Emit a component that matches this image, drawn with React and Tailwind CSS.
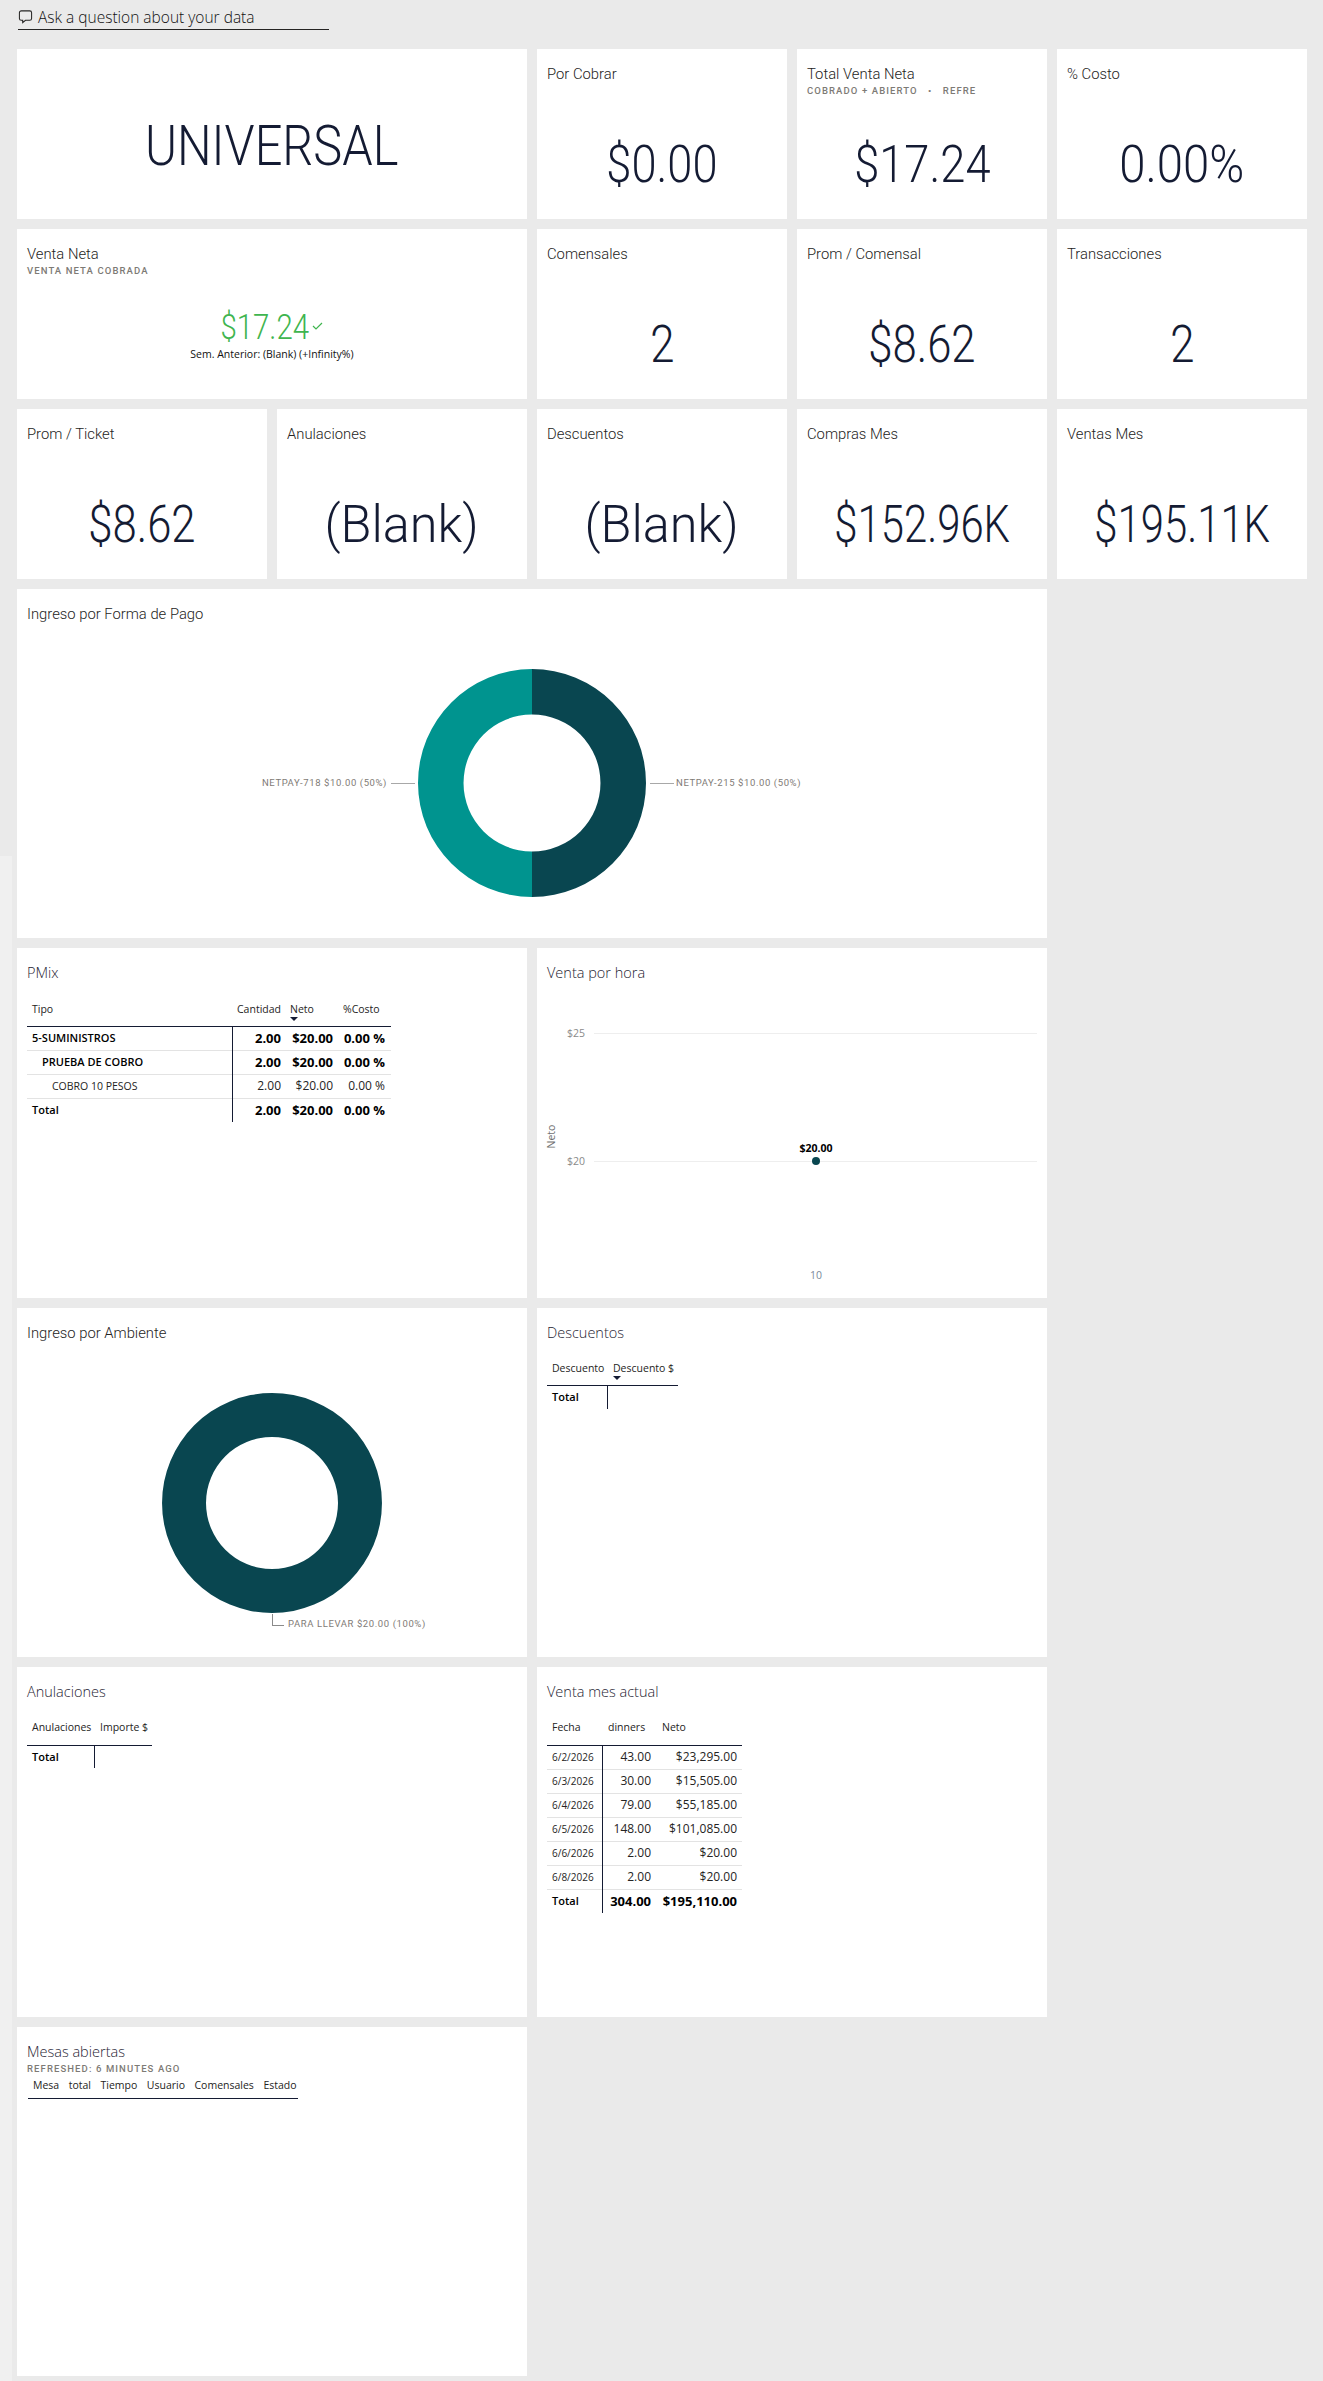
const din = "font-['Roboto',sans-serif] font-light";
const seg = "font-['Open_Sans','Noto_Sans',sans-serif]";

function Title({ children }) {
  return <div className={`${din} text-[14.8px] leading-[20px] text-[#252423] whitespace-nowrap`}>{children}</div>;
}
function Sub({ children }) {
  return <div className="font-['Roboto',sans-serif] text-[9.5px] leading-[12px] mt-[1px] font-medium tracking-[1.1px] text-[#7d7a75] whitespace-pre">{children}</div>;
}
function Kpi({ title, sub, value, scale = "scale-x-[0.84]" }) {
  return (
    <div className="h-[170px] bg-white flex flex-col">
      <div className="h-[62px] pl-[10px] pt-[15px]">
        <Title>{title}</Title>
        {sub && <Sub>{sub}</Sub>}
      </div>
      <div className="flex-1 flex items-center justify-center">
        <span className={`${din} text-[52px] leading-none text-[#141b33] inline-block ${scale} whitespace-nowrap`}>{value}</span>
      </div>
    </div>
  );
}
function SegTitle({ children }) {
  return <div className={`${seg} font-light text-[14.5px] leading-[20px] text-[#1f2433] whitespace-nowrap`}>{children}</div>;
}
function Donut({ size, segments }) {
  return (
    <svg width={size} height={size} viewBox={`0 0 ${size} ${size}`} className="block">
      {segments.map((s, i) => <path key={i} d={s.d} fill={s.fill} />)}
    </svg>
  );
}
function ring(R, r, a0, a1) {
  const p = (rad, a) => `${R + rad * Math.sin(a)} ${R - rad * Math.cos(a)}`;
  return `M${p(R, a0)} A${R} ${R} 0 0 1 ${p(R, a1)} L${p(r, a1)} A${r} ${r} 0 0 0 ${p(r, a0)} Z`;
}
const hd = `${seg} text-[10.5px] text-[#252423] font-normal text-left align-top`;
const Arrow = () => (
  <svg width="8" height="4" viewBox="0 0 8 4" className="block mt-[-1px]"><path d="M0 0h8L4 4z" fill="#141b33" /></svg>
);

function PMix() {
  const rows = [
    ["5-SUMINISTROS", "pl-[5px]", true],
    ["PRUEBA DE COBRO", "pl-[15px]", true],
    ["COBRO 10 PESOS", "pl-[25px]", false],
    ["Total", "pl-[5px]", true],
  ];
  return (
    <table className={`${seg} mt-[7px] w-[364px] table-fixed border-collapse`}>
      <thead>
        <tr className="h-[36px] border-b border-[#141b33]">
          <th className={`${hd} w-[205px] pl-[5px] pt-[12px]`}>Tipo</th>
          <th className={`${hd} w-[53px] pl-[5px] pt-[12px]`}>Cantidad</th>
          <th className={`${hd} w-[53px] pl-[5px] pt-[12px]`}>
            Neto
            <Arrow />
          </th>
          <th className={`${hd} pl-[5px] pt-[12px]`}>%Costo</th>
        </tr>
      </thead>
      <tbody>
        {rows.map(([t, p, b], i) => {
          const lab = b ? "font-semibold text-[11px] text-black" : "font-normal text-[10.5px] text-[#252423]";
          const w = b ? "font-bold text-[13px] text-black" : "font-normal text-[12px] text-[#252423]";
          return (
            <tr key={t} className={`h-[24px] ${i < 3 ? "border-b border-[#e3e3e3]" : ""}`}>
              <td className={`${p} ${lab} border-r border-[#141b33] whitespace-nowrap`}>{t}</td>
              <td className={`pr-[4px] text-right ${w} whitespace-nowrap`}>2.00</td>
              <td className={`pr-[5px] text-right ${w} whitespace-nowrap`}>$20.00</td>
              <td className={`pr-[6px] text-right ${w} whitespace-nowrap`}>0.00 %</td>
            </tr>
          );
        })}
      </tbody>
    </table>
  );
}
function EmptyTable({ a, b, w1, w2, arrow }) {
  return (
    <table className={`${seg} mt-[10px] table-fixed border-collapse`}>
      <thead>
        <tr className="h-[33px] border-b border-[#141b33]">
          <th className={`${hd} pl-[5px] pt-[8px] whitespace-nowrap ${w1}`}>{a}</th>
          <th className={`${hd} pl-[6px] pt-[8px] whitespace-nowrap ${w2}`}>
            {b}
            {arrow && <Arrow />}
          </th>
        </tr>
      </thead>
      <tbody>
        <tr className="h-[23px]">
          <td className="pl-[5px] text-[11px] font-semibold text-black border-r border-[#141b33]">Total</td>
          <td></td>
        </tr>
      </tbody>
    </table>
  );
}
function VentaMes() {
  const rows = [
    ["6/2/2026", "43.00", "$23,295.00"],
    ["6/3/2026", "30.00", "$15,505.00"],
    ["6/4/2026", "79.00", "$55,185.00"],
    ["6/5/2026", "148.00", "$101,085.00"],
    ["6/6/2026", "2.00", "$20.00"],
    ["6/8/2026", "2.00", "$20.00"],
  ];
  return (
    <table className={`${seg} mt-[10px] w-[195px] table-fixed border-collapse`}>
      <thead>
        <tr className="h-[33px] border-b border-[#141b33]">
          <th className={`${hd} w-[55px] pl-[5px] pt-[8px]`}>Fecha</th>
          <th className={`${hd} w-[54px] pl-[6px] pt-[8px]`}>dinners</th>
          <th className={`${hd} pl-[6px] pt-[8px]`}>Neto</th>
        </tr>
      </thead>
      <tbody>
        {rows.map((r) => (
          <tr key={r[0]} className="h-[24px] border-b border-[#e3e3e3]">
            <td className="pl-[5px] text-[10px] text-[#252423] border-r border-[#141b33]">{r[0]}</td>
            <td className="pr-[5px] text-right text-[12px] text-[#252423]">{r[1]}</td>
            <td className="pr-[5px] text-right text-[12px] text-[#252423]">{r[2]}</td>
          </tr>
        ))}
        <tr className="h-[24px]">
          <td className="pl-[5px] text-[11px] font-semibold text-black border-r border-[#141b33]">Total</td>
          <td className="pr-[5px] text-right text-[13px] font-bold text-black">304.00</td>
          <td className="pr-[5px] text-right text-[13px] font-bold text-black">$195,110.00</td>
        </tr>
      </tbody>
    </table>
  );
}

const donutLabel = `${din} font-normal text-[9.5px] tracking-[0.6px] leading-[14px] text-[#7f7b76] whitespace-nowrap`;

export default function App() {
  return (
    <div className="relative w-[1323px] h-[2381px] bg-[#eaeaea] overflow-hidden">
      <div className="absolute left-0 top-[856px] bottom-0 w-[12px] bg-[#f0f0f0]" />
      <div className="pl-[18px] pt-[5px] h-[49px]">
        <div className="w-[311px] h-[25px] border-b border-[#252423] flex items-center gap-[5px] pb-[1px]">
          <svg width="15" height="15" viewBox="0 0 16 16" fill="none" stroke="#252423" strokeWidth="1.1">
            <path d="M3.5 2h9a2 2 0 0 1 2 2v6a2 2 0 0 1-2 2H8l-3 2.6V12H3.5a2 2 0 0 1-2-2V4a2 2 0 0 1 2-2z" />
          </svg>
          <span className={`${seg} text-[15.5px] font-light leading-[20px] text-[#111] whitespace-nowrap`}>Ask a question about your data</span>
        </div>
      </div>
      <div className="relative ml-[17px] w-[1290px] grid grid-cols-[repeat(5,250px)] gap-[10px]">
        <div className="col-span-2 h-[170px] bg-white flex justify-center pt-[68px]">
          <span className={`${din} text-[56px] leading-[58px] text-[#141b33] inline-block scale-x-[0.87] whitespace-nowrap`}>UNIVERSAL</span>
        </div>
        <Kpi title="Por Cobrar" value="$0.00" scale="scale-x-[0.87]" />
        <Kpi title="Total Venta Neta" sub={"COBRADO + ABIERTO   •   REFRE"} value="$17.24" scale="scale-x-[0.87]" />
        <Kpi title="% Costo" value="0.00%" scale="scale-x-[0.91]" />

        <div className="col-span-2 h-[170px] bg-white flex flex-col">
          <div className="pl-[10px] pt-[15px]">
            <Title>Venta Neta</Title>
            <Sub>VENTA NETA COBRADA</Sub>
          </div>
          <div className="flex flex-col items-center pt-[31px]">
            <div className="flex items-center">
              <span className={`${din} text-[35px] leading-[40px] text-[#3fb54f] inline-block scale-x-[0.84] mx-[-9px] whitespace-nowrap`}>$17.24</span>
              <svg width="11" height="8" viewBox="0 0 11 8" fill="none" stroke="#3fb54f" strokeWidth="1.2" className="ml-[3px] mt-[-4px]"><path d="M1 4l3 3 6-6" /></svg>
            </div>
            <span className={`${seg} text-[10.5px] font-normal leading-[14px] text-[#111] whitespace-nowrap mt-[-1px]`}>Sem. Anterior: (Blank) (+Infinity%)</span>
          </div>
        </div>
        <Kpi title="Comensales" value="2" />
        <Kpi title="Prom / Comensal" value="$8.62" />
        <Kpi title="Transacciones" value="2" />

        <Kpi title="Prom / Ticket" value="$8.62" />
        <Kpi title="Anulaciones" value="(Blank)" scale="scale-x-[0.97]" />
        <Kpi title="Descuentos" value="(Blank)" scale="scale-x-[0.97]" />
        <Kpi title="Compras Mes" value="$152.96K" scale="scale-x-[0.805]" />
        <Kpi title="Ventas Mes" value="$195.11K" scale="scale-x-[0.805]" />
      </div>

      <div className="relative ml-[17px] mt-[10px] w-[1030px] grid grid-cols-[510px_510px] auto-rows-[349.4px] gap-[10px]">
        <div className="col-span-2 bg-white relative pl-[10px] pt-[15px]">
          <Title>Ingreso por Forma de Pago</Title>
          <div className="absolute left-[401px] top-[80px]">
            <Donut size={228} segments={[{ d: ring(114, 68.5, 0, Math.PI), fill: "#094650" }, { d: ring(114, 68.5, Math.PI, 2 * Math.PI), fill: "#00948f" }]} />
          </div>
          <div className={`absolute right-[660px] top-[187px] ${donutLabel}`}>NETPAY-718 $10.00 (50%)</div>
          <div className="absolute left-[374px] top-[194px] w-[24px] h-px bg-[#a8a8a8]" />
          <div className="absolute left-[633px] top-[194px] w-[24px] h-px bg-[#a8a8a8]" />
          <div className={`absolute left-[659px] top-[187px] ${donutLabel}`}>NETPAY-215 $10.00 (50%)</div>
        </div>

        <div className="bg-white pl-[10px] pt-[15px]">
          <SegTitle>PMix</SegTitle>
          <PMix />
        </div>
        <div className="bg-white relative pl-[10px] pt-[15px]">
          <SegTitle>Venta por hora</SegTitle>
          <div className="absolute left-[57px] right-[10px] top-[85px] h-px bg-[#eeeeee]" />
          <div className="absolute left-[57px] right-[10px] top-[213px] h-px bg-[#eeeeee]" />
          <span className={`${seg} absolute right-[462px] top-[78px] text-[10.5px] leading-[15px] text-[#8a8a8a]`}>$25</span>
          <span className={`${seg} absolute right-[462px] top-[206px] text-[10.5px] leading-[15px] text-[#8a8a8a]`}>$20</span>
          <span className={`${seg} absolute left-[3px] top-[181px] text-[10.5px] leading-[15px] text-[#707070] -rotate-90 origin-center`}>Neto</span>
          <span className={`${seg} absolute left-[249px] top-[193px] w-[60px] text-center text-[10.5px] leading-[15px] font-bold text-black`}>$20.00</span>
          <div className="absolute left-[275px] top-[209px] w-[8px] h-[8px] rounded-full bg-[#094650]" />
          <span className={`${seg} absolute left-[269px] top-[320px] w-[20px] text-center text-[10.5px] leading-[15px] text-[#7a8a9a]`}>10</span>
        </div>

        <div className="bg-white relative pl-[10px] pt-[15px]">
          <Title>Ingreso por Ambiente</Title>
          <div className="absolute left-[145px] top-[85px]">
            <Donut size={220} segments={[{ d: ring(110, 66, 0, Math.PI), fill: "#094650" }, { d: ring(110, 66, Math.PI, 2 * Math.PI), fill: "#094650" }]} />
          </div>
          <div className="absolute left-[255px] top-[306px] w-[12px] h-[12px] border-l border-b border-[#8a8a8a]" />
          <div className={`absolute left-[271px] top-[309px] ${donutLabel}`}>PARA LLEVAR $20.00 (100%)</div>
        </div>
        <div className="bg-white pl-[10px] pt-[15px]">
          <SegTitle>Descuentos</SegTitle>
          <EmptyTable a="Descuento" b="Descuento $" w1="w-[60px]" w2="w-[71px]" arrow />
        </div>

        <div className="bg-white pl-[10px] pt-[15px]">
          <SegTitle>Anulaciones</SegTitle>
          <EmptyTable a="Anulaciones" b="Importe $" w1="w-[67px]" w2="w-[58px]" />
        </div>
        <div className="bg-white pl-[10px] pt-[15px]">
          <SegTitle>Venta mes actual</SegTitle>
          <VentaMes />
        </div>

        <div className="bg-white pl-[10px] pt-[15px]">
          <SegTitle>Mesas abiertas</SegTitle>
          <div className="mt-[1px]"><Sub>REFRESHED: 6 MINUTES AGO</Sub></div>
          <div className={`${seg} w-[270px] ml-px h-[24px] pt-[1px] border-b border-[#141b33] flex pl-[5px] gap-[9.5px] text-[10.5px] leading-[18px] text-[#252423] whitespace-nowrap`}>
            <span>Mesa</span><span>total</span><span>Tiempo</span><span>Usuario</span><span>Comensales</span><span>Estado</span>
          </div>
        </div>
      </div>
    </div>
  );
}
